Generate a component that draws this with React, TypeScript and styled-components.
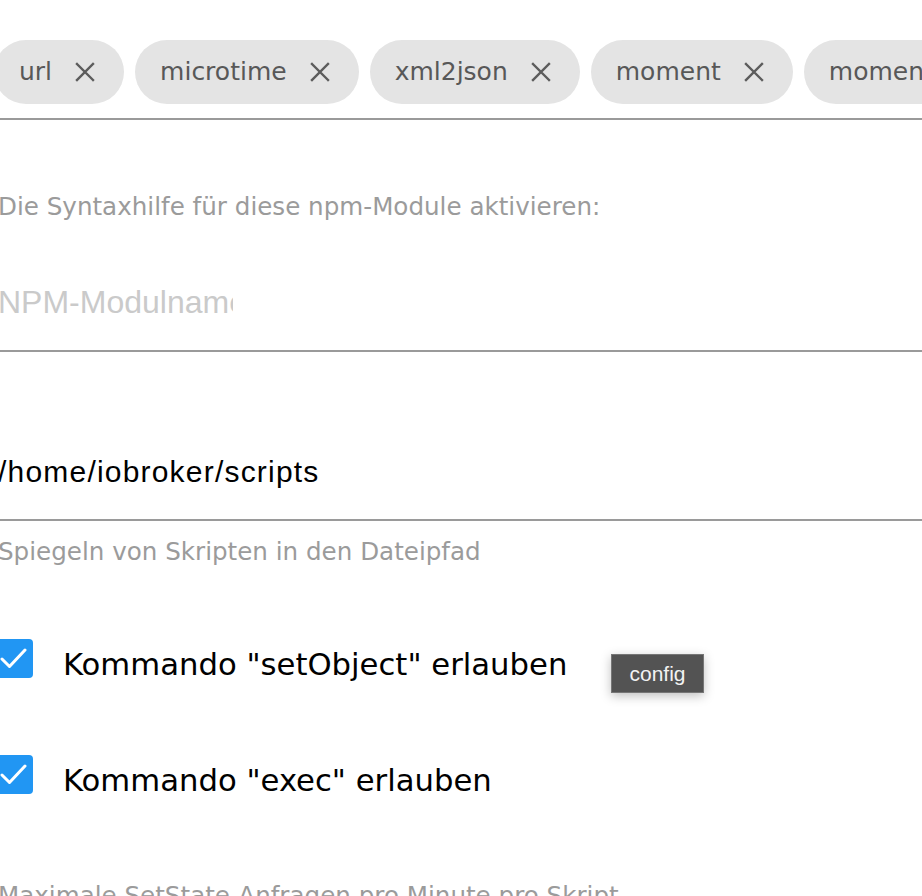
import React from "react";
import styled, { createGlobalStyle } from "styled-components";

const GlobalStyle = createGlobalStyle`
  html, body {
    margin: 0;
    padding: 0;
    background: #ffffff;
    overflow: hidden;
  }
  body {
    font-family: "DejaVu Sans", "Noto Sans", sans-serif;
  }
`;

const modules = ["url", "microtime", "xml2json", "moment", "moment-timezone"];

const Page = styled.div`
  display: flex;
  flex-direction: column;
  width: 930px;
  margin-left: -2px;
`;

const ChipField = styled.div`
  padding: 40px 0 14px;
  border-bottom: 2px solid #9a9a9a;
  overflow: hidden;
`;

const ChipRow = styled.div`
  display: flex;
  flex-wrap: nowrap;
  gap: 11px;
  margin-left: -4px;
`;

const Chip = styled.div`
  flex-shrink: 0;
  display: flex;
  align-items: center;
  height: 64px;
  border-radius: 32px;
  background: #e4e4e4;
  color: #585858;
  font-size: 25px;
`;

const ChipLabel = styled.span`
  padding: 0 23px 0 25px;
  white-space: nowrap;
  line-height: 30px;
`;

const ChipDelete = styled.svg`
  width: 20px;
  height: 20px;
  margin-right: 29px;
  flex-shrink: 0;
`;

const HelperText = styled.div<{ $top: number }>`
  margin-top: ${(p) => p.$top}px;
  font-size: 24.6px;
  line-height: 28px;
  color: #9b9b9b;
  white-space: nowrap;
`;

const TextField = styled.div<{ $top: number }>`
  padding-top: ${(p) => p.$top}px;
  padding-bottom: 28px;
  border-bottom: 2px solid #9a9a9a;
`;

const ModuleInput = styled.input`
  display: block;
  width: 235px;
  height: 40px;
  padding: 0;
  margin: 0;
  border: none;
  outline: none;
  background: transparent;
  font-family: "Liberation Sans", Arial, sans-serif;
  font-size: 32px;
  line-height: 40px;
  color: #000;

  &::placeholder {
    color: #cacaca;
    opacity: 1;
  }
`;

const PathValue = styled.div`
  height: 40px;
  font-family: "Liberation Sans", Arial, sans-serif;
  font-size: 30px;
  line-height: 40px;
  letter-spacing: 1.2px;
  color: #000;
  margin-bottom: -1px;
`;

const CheckRow = styled.label<{ $top: number }>`
  position: relative;
  display: flex;
  align-items: flex-start;
  gap: 30px;
  margin-top: ${(p) => p.$top}px;
  margin-left: -1px;
`;

const CheckBox = styled.span`
  flex-shrink: 0;
  display: flex;
  align-items: center;
  justify-content: center;
  width: 36px;
  height: 39px;
  border-radius: 4px;
  background: #2196f3;
`;

const CheckLabel = styled.span`
  margin-top: 8px;
  font-size: 30.7px;
  line-height: 36px;
  color: #000;
  white-space: nowrap;
`;

const Tooltip = styled.div`
  position: absolute;
  left: 614px;
  top: 15px;
  width: 91px;
  height: 37px;
  display: flex;
  align-items: center;
  justify-content: center;
  background: #535353;
  border: 1px solid #767676;
  color: #f2f2f2;
  font-family: "Liberation Sans", Arial, sans-serif;
  font-size: 21px;
  box-shadow: 0 3px 10px rgba(0, 0, 0, 0.25);
`;

const DeleteIcon = () => (
  <ChipDelete viewBox="0 0 20 20">
    <path
      d="M2 2 L18 18 M18 2 L2 18"
      stroke="#5c5c5c"
      strokeWidth="2.4"
      strokeLinecap="square"
      fill="none"
    />
  </ChipDelete>
);

const CheckMark = () => (
  <svg width="36" height="39" viewBox="0 0 36 39">
    <path
      d="M5 20 L12.5 27.5 L28 11"
      stroke="#fff"
      strokeWidth="3"
      fill="none"
      strokeLinecap="round"
      strokeLinejoin="round"
    />
  </svg>
);

export default function App() {
  return (
    <>
      <GlobalStyle />
      <Page>
        <ChipField>
          <ChipRow>
            {modules.map((name) => (
              <Chip key={name}>
                <ChipLabel>{name}</ChipLabel>
                <DeleteIcon />
              </Chip>
            ))}
          </ChipRow>
        </ChipField>

        <HelperText $top={73}>
          Die Syntaxhilfe für diese npm-Module aktivieren:
        </HelperText>

        <TextField $top={61}>
          <ModuleInput placeholder="NPM-Modulname" readOnly />
        </TextField>

        <TextField $top={100}>
          <PathValue>/home/iobroker/scripts</PathValue>
        </TextField>
        <HelperText $top={17}>Spiegeln von Skripten in den Dateipfad</HelperText>

        <CheckRow $top={73}>
          <CheckBox>
            <CheckMark />
          </CheckBox>
          <CheckLabel>Kommando "setObject" erlauben</CheckLabel>
          <Tooltip>config</Tooltip>
        </CheckRow>

        <CheckRow $top={72}>
          <CheckBox>
            <CheckMark />
          </CheckBox>
          <CheckLabel>Kommando "exec" erlauben</CheckLabel>
        </CheckRow>

        <HelperText $top={83}>
          Maximale SetState-Anfragen pro Minute pro Skript
        </HelperText>
      </Page>
    </>
  );
}
